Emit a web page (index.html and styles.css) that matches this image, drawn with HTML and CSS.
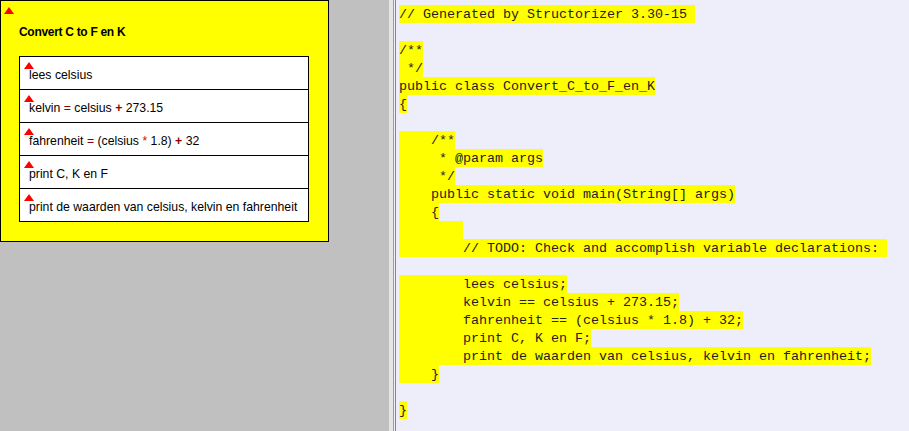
FILE: index.html
```html
<!DOCTYPE html>
<html>
<head>
<meta charset="utf-8">
<link rel="stylesheet" href="styles.css">
</head>
<body>
<div class="app">
  <div class="diagram-pane">
    <div class="program">
      <span class="mark mark-main"></span>
      <div class="title">Convert C to F en K</div>
      <div class="steps">
        <div class="step"><span class="mark"></span>lees celsius</div>
        <div class="step"><span class="mark"></span>kelvin <span class="op">=</span> celsius <span class="op plus">+</span> 273.15</div>
        <div class="step"><span class="mark"></span>fahrenheit <span class="op">=</span> (celsius <span class="op star">*</span> 1.8) <span class="op plus">+</span> 32</div>
        <div class="step"><span class="mark"></span>print C, K en F</div>
        <div class="step"><span class="mark"></span>print de waarden van celsius, kelvin en fahrenheit</div>
      </div>
    </div>
  </div>
  <div class="splitter"></div>
  <div class="code-frame">
    <div class="code">
      <div class="ln"><span class="hl">// Generated by Structorizer 3.30-15 </span></div>
      <div class="ln"></div>
      <div class="ln"><span class="hl">/**</span></div>
      <div class="ln"><span class="hl"> */</span></div>
      <div class="ln"><span class="hl">public class Convert_C_to_F_en_K</span></div>
      <div class="ln"><span class="hl">{</span></div>
      <div class="ln"></div>
      <div class="ln"><span class="hl">    /**</span></div>
      <div class="ln"><span class="hl">     * @param args</span></div>
      <div class="ln"><span class="hl">     */</span></div>
      <div class="ln"><span class="hl">    public static void main(String[] args)</span></div>
      <div class="ln"><span class="hl">    {</span></div>
      <div class="ln"><span class="hl">        </span></div>
      <div class="ln"><span class="hl">        // TODO: Check and accomplish variable declarations: </span></div>
      <div class="ln"></div>
      <div class="ln"><span class="hl">        lees celsius;</span></div>
      <div class="ln"><span class="hl">        kelvin == celsius + 273.15;</span></div>
      <div class="ln"><span class="hl">        fahrenheit == (celsius * 1.8) + 32;</span></div>
      <div class="ln"><span class="hl">        print C, K en F;</span></div>
      <div class="ln"><span class="hl">        print de waarden van celsius, kelvin en fahrenheit;</span></div>
      <div class="ln"><span class="hl">    }</span></div>
      <div class="ln"></div>
      <div class="ln"><span class="hl">}</span></div>
    </div>
  </div>
</div>
</body>
</html>
```
FILE: styles.css
```css
* { box-sizing: border-box; }
html, body { margin: 0; padding: 0; }
body {
  width: 909px;
  height: 431px;
  overflow: hidden;
  font-family: "Liberation Sans", Arial, sans-serif;
}
.app {
  display: flex;
  height: 431px;
}
.diagram-pane {
  width: 389px;
  flex: none;
  background: #c0c0c0;
}
.program {
  position: relative;
  width: 329px;
  height: 242px;
  background: #ffff00;
  border: 1px solid #000;
  padding: 24px 0 0 18px;
}
.mark {
  position: absolute;
  left: 4px;
  top: 5px;
  width: 0;
  height: 0;
  border-left: 5px solid transparent;
  border-right: 5px solid transparent;
  border-bottom: 7px solid #ff0000;
}
.mark-main {
  left: 3px;
  top: 6px;
}
.title {
  font-weight: bold;
  font-size: 12px;
  letter-spacing: -0.3px;
  line-height: 15px;
  height: 15px;
  color: #000;
  margin-bottom: 16px;
}
.steps {
  width: 290px;
  border: 1px solid #000;
  background: #fff;
}
.step {
  position: relative;
  height: 33px;
  border-bottom: 1px solid #000;
  padding: 11px 0 0 9px;
  font-size: 12.25px;
  line-height: 14px;
  color: #000;
  white-space: nowrap;
}
.step:last-child {
  height: 32px;
  border-bottom: none;
}
.op { color: #8b0000; }
.plus { font-weight: bold; }
.star { color: #e00000; }
.splitter {
  width: 4px;
  flex: none;
  background: #e6e6e6;
}
.code-frame {
  flex: 1;
  border-left: 1px solid #9c9c9c;
  padding-left: 1px;
  background: #f2f2f2;
  display: flex;
}
.code {
  flex: 1;
  border-left: 1px solid #858585;
  background: #eeeefb;
  padding: 5px 0 0 3px;
  font-family: "Liberation Mono", "Courier New", monospace;
  font-size: 13.333px;
  color: #222;
}
.ln {
  height: 18px;
  line-height: 19px;
  white-space: pre;
}
.hl {
  display: inline-block;
  height: 18px;
  background: #ffff00;
  white-space: pre;
  vertical-align: top;
}
```
